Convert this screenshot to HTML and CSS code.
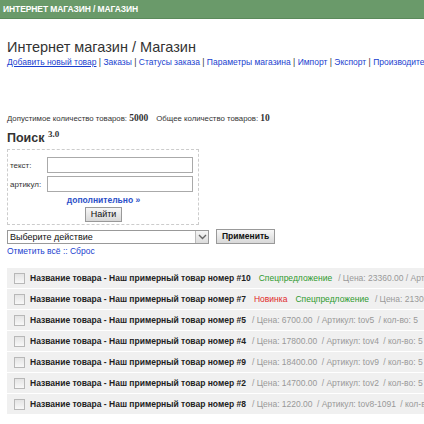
FILE: index.html
```html
<!DOCTYPE html>
<html lang="ru">
<head>
<meta charset="utf-8">
<link rel="stylesheet" href="styles.css">
</head>
<body>
<div class="topbar">ИНТЕРНЕТ МАГАЗИН / МАГАЗИН</div>
<div class="page">
  <h1 class="title">Интернет магазин / Магазин</h1>
  <div class="menu"><a class="u" href="#">Добавить новый товар</a> | <a href="#">Заказы</a> | <a href="#">Статусы заказа</a> | <a href="#">Параметры магазина</a> | <a href="#">Импорт</a> | <a href="#">Экспорт</a> | <a href="#">Производители</a></div>
  <div class="counts">Допустимое количество товаров: <b>5000</b> <span class="gap"></span>Общее количество товаров: <b>10</b></div>
  <div class="search-title">Поиск <sup>3.0</sup></div>
  <div class="search">
    <div class="frow"><span class="lbl">текст:</span><span class="inp"></span></div>
    <div class="frow"><span class="lbl">артикул:</span><span class="inp"></span></div>
    <div class="more"><a href="#">дополнительно »</a></div>
    <div class="btnrow"><span class="btn">Найти</span></div>
  </div>
  <div class="actions">
    <div class="select"><span class="sel-text">Выберите действие</span><span class="sel-arrow"><svg width="9" height="6" viewBox="0 0 9 6"><path d="M1 1 L4.5 4.5 L8 1" fill="none" stroke="#666" stroke-width="1.4"/></svg></span></div>
    <span class="btn bold">Применить</span>
  </div>
  <div class="marks"><a href="#">Отметить всё</a> :: <a href="#">Сброс</a></div>
  <div class="list">
    <div class="row"><span class="cb"></span><b>Название товара - Наш примерный товар номер #10</b><span class="green">Спецпредложение</span><span class="meta">/ Цена: 23360.00 / Артикул: tov10 / кол-во: 5</span></div>
    <div class="row"><span class="cb"></span><b>Название товара - Наш примерный товар номер #7</b><span class="red">Новинка</span><span class="green">Спецпредложение</span><span class="meta">/ Цена: 21300.00 / Артикул: tov7</span></div>
    <div class="row"><span class="cb"></span><b>Название товара - Наш примерный товар номер #5</b><span class="meta">/ Цена: 6700.00 <span class="s">/ Артикул: tov5</span> <span class="s">/ кол-во: 5</span></span></div>
    <div class="row"><span class="cb"></span><b>Название товара - Наш примерный товар номер #4</b><span class="meta">/ Цена: 17800.00 <span class="s">/ Артикул: tov4</span> <span class="s">/ кол-во: 5</span></span></div>
    <div class="row"><span class="cb"></span><b>Название товара - Наш примерный товар номер #9</b><span class="meta">/ Цена: 18400.00 <span class="s">/ Артикул: tov9</span> <span class="s">/ кол-во: 5</span></span></div>
    <div class="row"><span class="cb"></span><b>Название товара - Наш примерный товар номер #2</b><span class="meta">/ Цена: 14700.00 <span class="s">/ Артикул: tov2</span> <span class="s">/ кол-во: 5</span></span></div>
    <div class="row"><span class="cb"></span><b>Название товара - Наш примерный товар номер #8</b><span class="meta">/ Цена: 1220.00 <span class="s">/ Артикул: tov8-1091</span> <span class="s">/ кол-во: 5</span></span></div>
  </div>
</div>
</body>
</html>
```
FILE: styles.css
```css
html, body { margin: 0; padding: 0; overflow: hidden; background: #fff; }
body { font-family: "Liberation Sans", Arial, sans-serif; font-size: 9px; color: #333; width: 424px; }
a { color: #1a3fcf; text-decoration: none; }
.topbar { background: #6a9a6a; color: #fff; font-weight: bold; font-size: 8.5px; height: 18px; line-height: 18px; padding-left: 3px; letter-spacing: -0.1px; border-bottom: 1px solid #5b8a5b; }
.page { padding: 0 0 0 7px; white-space: nowrap; }
.title { font-size: 14.5px; font-weight: normal; color: #333; margin: 18px 0 0; line-height: 20px; }
.menu { margin-top: 0; font-size: 8.5px; line-height: 11px; color: #333; }
.menu a.u { text-decoration: underline; }
.counts { margin-top: 44px; font-size: 7.8px; line-height: 12px; }
.counts b { font-family: "Liberation Serif", serif; font-size: 9.5px; }
.counts .gap { display: inline-block; width: 6px; }
.search-title { font-size: 12.5px; font-weight: bold; margin-top: 6px; line-height: 15px; }
.search-title sup { font-family: "Liberation Serif", serif; font-size: 9px; font-weight: bold; vertical-align: 5px; line-height: 0; }
.search { width: 187px; border: 1px dashed #ccc; margin-top: 3px; padding: 6px 1px 2px 2px; }
.frow { display: flex; align-items: center; height: 18px; margin-bottom: 1px; }
.lbl { width: 36px; font-size: 8px; }
.inp { width: 144px; height: 14px; border: 1px solid #aaa; background: #fff; margin-left: 1px; }
.more { text-align: center; margin-top: 0; font-size: 8.5px; font-weight: bold; line-height: 12px; }
.more a { color: #2b4fc8; }
.btnrow { text-align: center; margin-top: 1px; }
.btn { display: inline-block; border: 1px solid #999; background: linear-gradient(#f7f7f7, #d8d8d8); padding: 0 5px; height: 13px; line-height: 13px; font-size: 9px; color: #111; }
.btn.bold { font-weight: bold; padding: 0 5px; font-size: 8.5px; }
.actions { display: flex; align-items: center; gap: 7px; margin-top: 4px; }
.select { display: flex; width: 200px; height: 12px; border: 1px solid #999; background: #fff; font-size: 9px; line-height: 12px; color: #111; }
.sel-text { flex: 1; padding-left: 2px; }
.sel-arrow { width: 12px; border-left: 1px solid #bbb; background: linear-gradient(#f5f5f5, #dcdcdc); display: flex; align-items: center; justify-content: center; }
.marks { margin-top: 2px; font-size: 8.5px; line-height: 11px; color: #1a3fcf; }
.list { margin-top: 11px; }
.row { display: flex; align-items: center; height: 20px; background: #f0f0f0; border-bottom: 1px solid #fff; padding-left: 7px; font-size: 8.5px; }
.cb { width: 9px; height: 9px; border: 1px solid #b8b8b8; background: linear-gradient(#e4e4e4, #f8f8f8); margin-right: 5px; flex: none; }
.row b { color: #222; }
.green { color: #2e9a2e; margin-left: 8px; }
.red { color: #e02828; margin-left: 8px; }
.meta { color: #999; margin-left: 6px; }
.meta .s { margin-left: 2px; }
```
